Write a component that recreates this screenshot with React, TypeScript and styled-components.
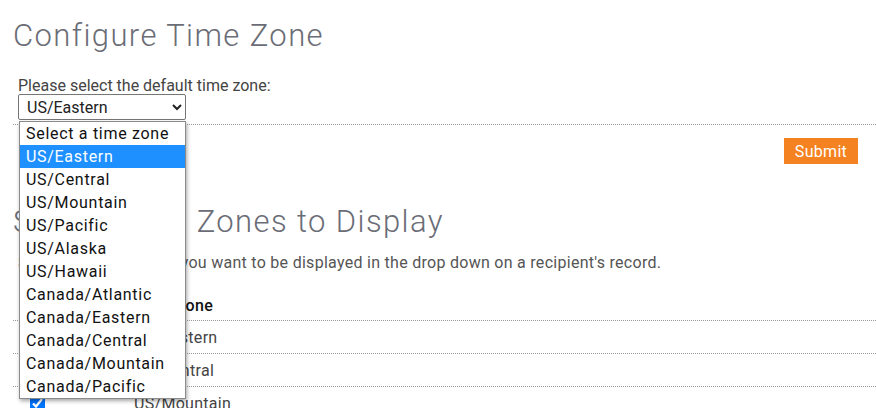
import styled, { createGlobalStyle } from "styled-components";

const zones = [
  "US/Eastern",
  "US/Central",
  "US/Mountain",
  "US/Pacific",
  "US/Alaska",
  "US/Hawaii",
  "Canada/Atlantic",
  "Canada/Eastern",
  "Canada/Central",
  "Canada/Mountain",
  "Canada/Pacific",
];

const GlobalStyle = createGlobalStyle`
  html, body {
    margin: 0;
    padding: 0;
    background: #fff;
    overflow: hidden;
  }
  body {
    font-family: Roboto, "Liberation Sans", Arial, sans-serif;
    color: #333;
  }
`;

const Page = styled.div`
  position: relative;
  padding: 18px 0 0 13px;
`;

const Title = styled.h1`
  margin: 0;
  font-size: 31px;
  font-weight: 300;
  line-height: 36px;
  color: #6b6d76;
  letter-spacing: 1.4px;
`;

const Form = styled.div`
  margin-top: 23px;
  padding-left: 5px;
`;

const Label = styled.label`
  display: block;
  font-size: 16px;
  line-height: 17px;
  color: #444;
`;

const Select = styled.select`
  display: block;
  width: 168px;
  height: 26px;
  font-family: Roboto, "Liberation Sans", Arial, sans-serif;
  font-size: 16px;
  color: #222;
  border: 1px solid #767676;
  border-radius: 2px;
  background: #fff;
  padding: 0 4px;
`;

const Rule = styled.hr`
  margin: 4px 0 0;
  border: 0;
  border-top: 1px dotted #999;
`;

const Actions = styled.div`
  display: flex;
  justify-content: flex-end;
  padding: 13px 18px 0 0;
`;

const Submit = styled.button`
  width: 74px;
  height: 26px;
  border: 0;
  background: #f58220;
  color: #fff;
  font-family: Roboto, "Liberation Sans", Arial, sans-serif;
  font-size: 16px;
  letter-spacing: 0.3px;
  padding: 0;
`;

const Section = styled.div`
  margin-top: 40px;
`;

const Intro = styled.p`
  margin: 14px 0 0 5px;
  font-size: 16px;
  line-height: 18px;
  letter-spacing: 0.28px;
  color: #555;
`;

const Table = styled.div`
  margin-top: 19px;
`;

const Row = styled.div<{ $head?: boolean }>`
  display: grid;
  grid-template-columns: 121px 1fr;
  align-items: center;
  height: ${(p) => (p.$head ? "29px" : "32px")};
  border-bottom: 1px dotted #999;
  font-size: 16px;
  letter-spacing: 0.3px;
  font-weight: ${(p) => (p.$head ? 500 : 400)};
  color: ${(p) => (p.$head ? "#111" : "#444")};
`;

const CheckCell = styled.div`
  display: flex;
  justify-content: flex-start;
  padding-left: 17px;
`;

const Check = styled.input`
  width: 15px;
  height: 15px;
  margin: 0;
  accent-color: #0075ff;
`;

const Popup = styled.ul`
  position: absolute;
  left: 19px;
  top: 121px;
  width: 165px;
  margin: 0;
  padding: 0;
  list-style: none;
  background: #fff;
  border: 1px solid #8a8a8a;
  box-shadow: 1px 2px 4px rgba(0, 0, 0, 0.35);
  font-size: 16px;
  letter-spacing: 0.7px;
  color: #111;
`;

const Option = styled.li<{ $active?: boolean }>`
  height: 23px;
  line-height: 23px;
  padding-left: 6px;
  white-space: nowrap;
  background: ${(p) => (p.$active ? "#1e90ff" : "transparent")};
  color: ${(p) => (p.$active ? "#fff" : "#111")};
`;

export default function App() {
  return (
    <Page>
      <GlobalStyle />
      <Title>Configure Time Zone</Title>
      <Form>
        <Label htmlFor="tz">Please select the default time zone:</Label>
        <Select id="tz" defaultValue="US/Eastern">
          <option value="">Select a time zone</option>
          {zones.map((z) => (
            <option key={z} value={z}>
              {z}
            </option>
          ))}
        </Select>
      </Form>
      <Rule />
      <Actions>
        <Submit type="button">Submit</Submit>
      </Actions>
      <Section>
        <Title as="h2">Select Time Zones to Display</Title>
        <Intro>
          Select the time zones you want to be displayed in the drop down on a
          recipient's record.
        </Intro>
        <Table>
          <Row $head>
            <CheckCell>Display</CheckCell>
            <div>Time Zone</div>
          </Row>
          {zones.slice(0, 3).map((z) => (
            <Row key={z}>
              <CheckCell>
                <Check type="checkbox" defaultChecked />
              </CheckCell>
              <div>{z}</div>
            </Row>
          ))}
        </Table>
      </Section>
      <Popup>
        <Option>Select a time zone</Option>
        {zones.map((z) => (
          <Option key={z} $active={z === "US/Eastern"}>
            {z}
          </Option>
        ))}
      </Popup>
    </Page>
  );
}
